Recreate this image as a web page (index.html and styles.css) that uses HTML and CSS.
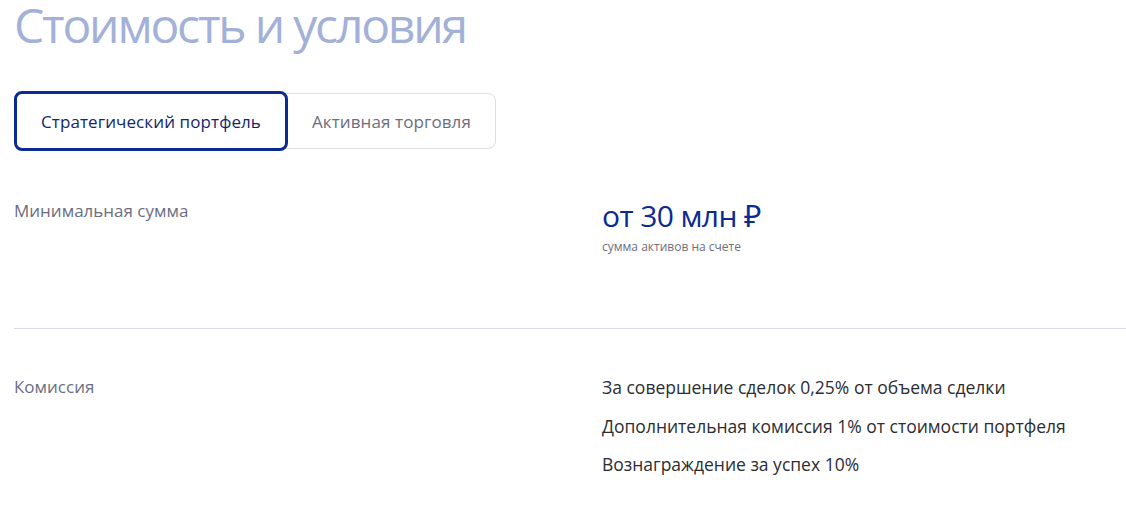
FILE: index.html
```html
<!DOCTYPE html>
<html lang="ru">
<head>
<meta charset="utf-8">
<link rel="stylesheet" href="styles.css">
</head>
<body>
<main class="page">
  <h1 class="title">Стоимость и условия</h1>
  <div class="tabs">
    <button class="tab tab-active">Стратегический портфель</button>
    <button class="tab">Активная торговля</button>
  </div>
  <section class="row row-first">
    <div class="label">Минимальная сумма</div>
    <div class="value">
      <div class="amount">от 30 млн ₽</div>
      <div class="note">сумма активов на счете</div>
    </div>
  </section>
  <hr class="divider">
  <section class="row row-second">
    <div class="label">Комиссия</div>
    <div class="value lines">
      <p>За совершение сделок 0,25% от объема сделки</p>
      <p>Дополнительная комиссия 1% от стоимости портфеля</p>
      <p>Вознаграждение за успех 10%</p>
    </div>
  </section>
</main>
</body>
</html>
```

FILE: styles.css
```css
* { box-sizing: border-box; }
html, body { margin: 0; padding: 0; background: #fff; }
body {
  font-family: "Open Sans", "Noto Sans", sans-serif;
  color: #2b2d33;
  overflow: hidden;
}
.page {
  padding: 0 0 0 14px;
  width: 1126px;
}
.title {
  margin: 0;
  font-size: 48px;
  line-height: 50px;
  height: 51px;
  font-weight: 400;
  letter-spacing: -2.2px;
  color: #a3b1d8;
  white-space: nowrap;
}
.tabs {
  margin-top: 42px;
  display: inline-flex;
  align-items: center;
  border: 1px solid #dcdce4;
  border-radius: 8px;
  height: 56px;
}
.tab {
  font-family: inherit;
  font-size: 17px;
  letter-spacing: 0.1px;
  background: none;
  border: none;
  color: #6b6e80;
  height: 54px;
  padding: 0 24px;
  cursor: pointer;
}
.tab-active {
  height: 60px;
  margin: -2px 0 -2px -1px;
  border: 3px solid #0b2a92;
  border-radius: 8px;
  color: #13266e;
  padding: 0 24px;
}
.row {
  display: grid;
  grid-template-columns: 588px 1fr;
}
.row-first {
  margin-top: 49px;
  height: 130px;
}
.label {
  font-size: 17px;
  color: #6b6e80;
  line-height: 26px;
}
.amount {
  font-size: 30px;
  line-height: 40px;
  color: #0b2a92;
  letter-spacing: -0.6px;
  margin-top: -2px;
}
.note {
  font-size: 12px;
  color: #6b6e80;
  line-height: 16px;
  margin-top: 3px;
}
.divider {
  margin: 0;
  border: none;
  border-top: 1px solid #dcdae6;
}
.row-second {
  margin-top: 45px;
}
.lines p {
  margin: 0 0 12.5px;
  font-size: 17.5px;
  line-height: 26px;
  color: #2b2d33;
}
```
